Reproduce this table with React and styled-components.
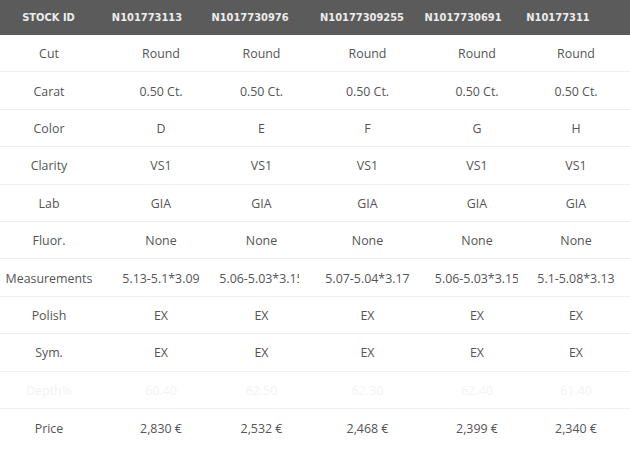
import React from 'react';
import styled, { createGlobalStyle } from 'styled-components';

const GlobalStyle = createGlobalStyle`
  html, body {
    margin: 0;
    padding: 0;
    background: #fff;
  }
`;

const Viewport = styled.div`
  width: 630px;
  height: 452px;
  overflow: hidden;
  background: #fff;
`;

const HeaderBar = styled.div`
  display: grid;
  grid-template-columns: 97px 100px 106px 118px 84px 106px;
  height: 35px;
  width: 630px;
  background: #5b5b5b;
`;

const HeaderCell = styled.div`
  display: flex;
  align-items: center;
  justify-content: center;
  white-space: nowrap;
  font-family: 'DejaVu Sans Condensed', 'DejaVu Sans', sans-serif;
  font-weight: bold;
  font-size: 11px;
  color: #ececec;
  padding-bottom: 1px;
`;

const Body = styled.div`
  width: 634px;
`;

const Row = styled.div`
  display: grid;
  grid-template-columns: 98px 126px 75px 137px 82px 116px;
  height: 37.4px;
  box-sizing: border-box;
  padding-top: 1px;
  border-bottom: ${({ $last }) => ($last ? 'none' : '1px solid #f0f0f0')};
  color: ${({ $faded }) => ($faded ? '#f3f3f3' : '#555')};
`;

const Cell = styled.div`
  position: relative;
  background: #fff;
  display: flex;
  align-items: center;
  justify-content: center;
  white-space: nowrap;
  font-family: 'Open Sans', sans-serif;
  font-size: 12.4px;
`;

const ids = ['N101773113', 'N1017730976', 'N10177309255', 'N1017730691', 'N10177311'];

const rows = [
  ['Cut', 'Round', 'Round', 'Round', 'Round', 'Round'],
  ['Carat', '0.50 Ct.', '0.50 Ct.', '0.50 Ct.', '0.50 Ct.', '0.50 Ct.'],
  ['Color', 'D', 'E', 'F', 'G', 'H'],
  ['Clarity', 'VS1', 'VS1', 'VS1', 'VS1', 'VS1'],
  ['Lab', 'GIA', 'GIA', 'GIA', 'GIA', 'GIA'],
  ['Fluor.', 'None', 'None', 'None', 'None', 'None'],
  ['Measurements', '5.13-5.1*3.09', '5.06-5.03*3.15', '5.07-5.04*3.17', '5.06-5.03*3.15', '5.1-5.08*3.13'],
  ['Polish', 'EX', 'EX', 'EX', 'EX', 'EX'],
  ['Sym.', 'EX', 'EX', 'EX', 'EX', 'EX'],
  ['Depth%', '60.40', '62.50', '62.30', '62.40', '61.40'],
  ['Price', '2,830 €', '2,532 €', '2,468 €', '2,399 €', '2,340 €']
];

export default function App() {
  return (
    <Viewport>
      <GlobalStyle />
      <HeaderBar>
        <HeaderCell>STOCK ID</HeaderCell>
        {ids.map(id => (
          <HeaderCell key={id}>{id}</HeaderCell>
        ))}
      </HeaderBar>
      <Body>
        {rows.map((r, i) => (
          <Row key={r[0]} $faded={r[0] === 'Depth%'} $last={i === rows.length - 1}>
            {r.map((v, j) => (
              <Cell key={j}>{v}</Cell>
            ))}
          </Row>
        ))}
      </Body>
    </Viewport>
  );
}
